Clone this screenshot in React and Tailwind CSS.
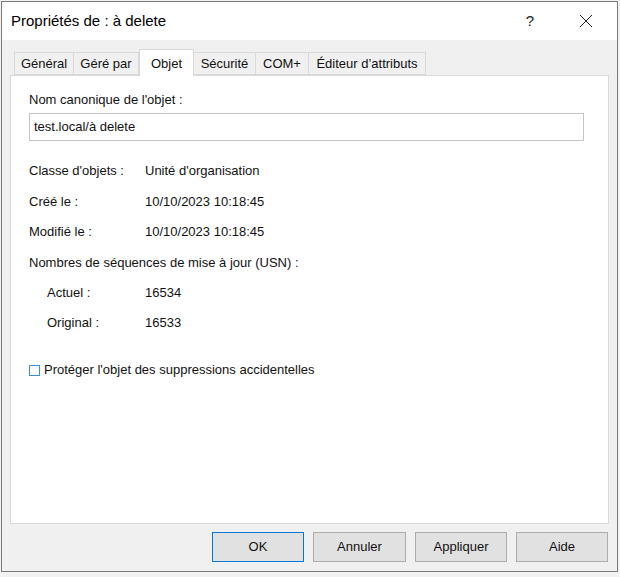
import React from 'react';

const tabs = [
    { label: 'Général', w: 'w-[60px]' },
    { label: 'Géré par', w: 'w-[65px]' },
    { label: 'Objet', w: 'w-[55px]', active: true },
    { label: 'Sécurité', w: 'w-[62px]' },
    { label: 'COM+', w: 'w-[53px]' },
    { label: 'Éditeur d’attributs', w: 'w-[117px]' },
];

const InfoRow = ({ label, value, indent }) => (
    <div className="h-[30.4px] flex items-center">
        <span className={indent ? 'w-[98px] ml-[18px]' : 'w-[116px]'}>{label}</span>
        <span>{value}</span>
    </div>
);

const App = () => {
    return (
        <div className="w-[620px] h-[577px] bg-[#f2f2f2] pt-px pl-px" style={{ fontFamily: '"Liberation Sans", Arial, sans-serif' }}>
            <div className="w-[617px] h-[571px] border border-[#7a7a7a] bg-[#f0f0f0] flex flex-col text-[13px] text-[#111]">
                {/* title bar */}
                <div className="h-[38px] bg-white flex items-center pl-[9px] shrink-0">
                    <span className="text-[15px] text-black">Propriétés de : à delete</span>
                    <span className="ml-auto text-[15px] font-light text-[#222] mr-[45px]">?</span>
                    <svg width="14" height="14" viewBox="0 0 14 14" className="mr-[24px]">
                        <path d="M1 1 L13 13 M13 1 L1 13" stroke="#222" strokeWidth="1" fill="none" />
                    </svg>
                </div>

                {/* tabs */}
                <div className="flex items-end pl-[12px] mt-[9px] shrink-0 relative z-10">
                    {tabs.map((t) =>
                        t.active ? (
                            <div key={t.label} className={`${t.w} h-[27px] bg-white border border-b-0 border-[#d9d9d9] flex justify-center pt-[4px] mb-[-1px]`}>
                                {t.label}
                            </div>
                        ) : (
                            <div key={t.label} className={`${t.w} h-[23px] bg-[#f0f0f0] border border-[#d9d9d9] border-l-0 first:border-l flex items-center justify-center`}>
                                {t.label}
                            </div>
                        )
                    )}
                </div>

                {/* panel */}
                <div className="mx-[8px] h-[449px] bg-white border border-[#d9d9d9] pl-[18px] pt-[16px] shrink-0">
                    <div className="leading-4">Nom canonique de l'objet :</div>
                    <div className="mt-[5px] w-[555px] h-[28px] border border-[#c4c4c4] flex items-center pl-[4px]">
                        test.local/à delete
                    </div>
                    <div className="mt-[15px]">
                        <InfoRow label="Classe d'objets :" value="Unité d'organisation" />
                        <InfoRow label="Créé le :" value="10/10/2023 10:18:45" />
                        <InfoRow label="Modifié le :" value="10/10/2023 10:18:45" />
                        <div className="h-[30.4px] flex items-center">Nombres de séquences de mise à jour (USN) :</div>
                        <InfoRow label="Actuel :" value="16534" indent />
                        <InfoRow label="Original :" value="16533" indent />
                    </div>
                    <div className="mt-[22px] flex items-center">
                        <span className="w-[11px] h-[11px] border border-[#3b8ed8] bg-white mr-[4px]" />
                        <span>Protéger l'objet des suppressions accidentelles</span>
                    </div>
                </div>

                {/* buttons */}
                <div className="flex justify-end gap-[9px] pr-[9px] mt-[8px]">
                    <button className="w-[92px] h-[30px] bg-[#e1e1e1] border border-[#0078d7]">OK</button>
                    <button className="w-[93px] h-[30px] bg-[#e1e1e1] border border-[#adadad]">Annuler</button>
                    <button className="w-[92px] h-[30px] bg-[#e1e1e1] border border-[#adadad]">Appliquer</button>
                    <button className="w-[92px] h-[30px] bg-[#e1e1e1] border border-[#adadad]">Aide</button>
                </div>
            </div>
        </div>
    );
};

export default App;
